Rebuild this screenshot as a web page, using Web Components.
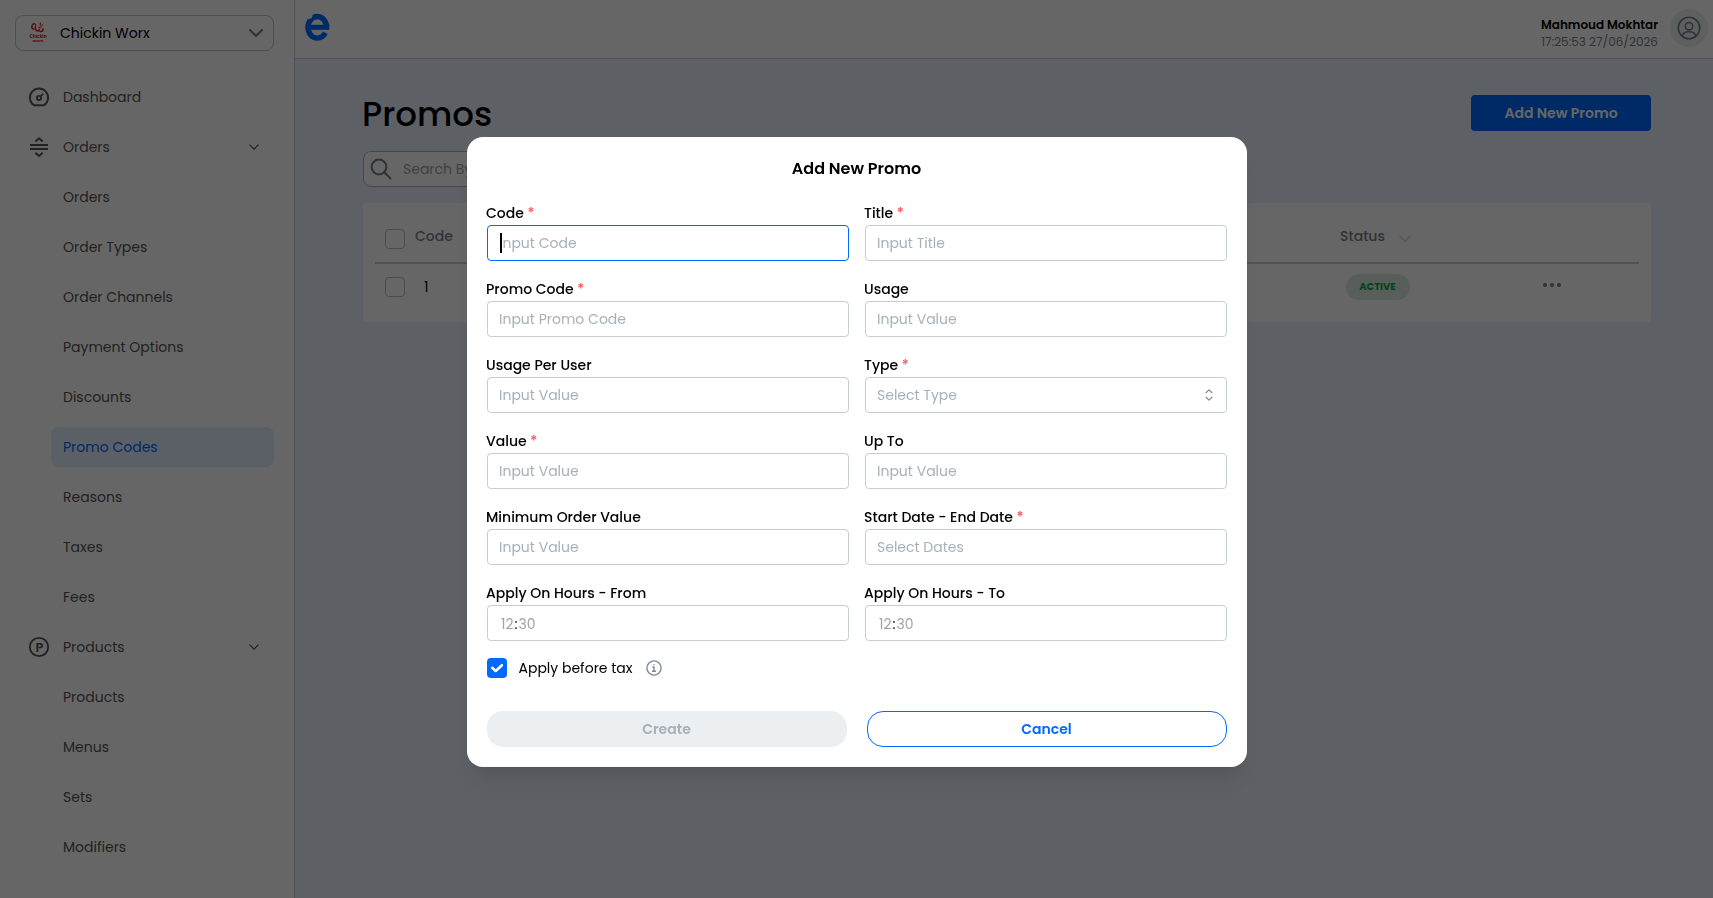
<!DOCTYPE html>
<html lang="en">
<head>
<meta charset="utf-8">
<title>Promos</title>
<style>
    html, body { margin: 0; height: 100%; overflow: hidden; }
    body {
        font-family: Poppins, Inter, "Open Sans", sans-serif;
        font-size: 14px;
        line-height: 20px;
        color: #000;
        --blue: #006aff;
        --line: #c8d3da;
        --muted: #78818b;
    }
</style>
</head>
<body>
<promo-app>
    <side-bar slot="side">
        <nav-item icon="dashboard">Dashboard</nav-item>
        <nav-item icon="orders" group>Orders</nav-item>
        <nav-item>Orders</nav-item>
        <nav-item>Order Types</nav-item>
        <nav-item>Order Channels</nav-item>
        <nav-item>Payment Options</nav-item>
        <nav-item>Discounts</nav-item>
        <nav-item active>Promo Codes</nav-item>
        <nav-item>Reasons</nav-item>
        <nav-item>Taxes</nav-item>
        <nav-item>Fees</nav-item>
        <nav-item icon="products" group>Products</nav-item>
        <nav-item>Products</nav-item>
        <nav-item>Menus</nav-item>
        <nav-item>Sets</nav-item>
        <nav-item>Modifiers</nav-item>
    </side-bar>
    <top-bar slot="top"></top-bar>
    <promo-page></promo-page>
</promo-app>

<modal-dialog>
    <span slot="title">Add New Promo</span>
    <form-field label="Code" required hint="Input Code" focused></form-field>
    <form-field label="Title" required hint="Input Title"></form-field>
    <form-field label="Promo Code" required hint="Input Promo Code"></form-field>
    <form-field label="Usage" hint="Input Value"></form-field>
    <form-field label="Usage Per User" hint="Input Value"></form-field>
    <form-field label="Type" required hint="Select Type" select></form-field>
    <form-field label="Value" required hint="Input Value"></form-field>
    <form-field label="Up To" hint="Input Value"></form-field>
    <form-field label="Minimum Order Value" hint="Input Value"></form-field>
    <form-field label="Start Date - End Date" required hint="Select Dates"></form-field>
    <form-field label="Apply On Hours - From" time></form-field>
    <form-field label="Apply On Hours - To" time></form-field>
    <check-line slot="option">Apply before tax</check-line>
    <pill-button slot="action" disabled>Create</pill-button>
    <pill-button slot="action">Cancel</pill-button>
</modal-dialog>

<script>
    const ICONS = {
        dashboard: `<svg width="24" height="24" viewBox="0 0 24 24" fill="none" stroke="currentColor" stroke-width="1.9" stroke-linecap="round" stroke-linejoin="round">
            <path d="M7 20.2a9.1 9.1 0 1 1 10 0z"/><circle cx="12" cy="13" r="2.1"/><path d="M13.6 11.4 15.8 9.2"/></svg>`,
        orders: `<svg width="24" height="24" viewBox="0 0 24 24" fill="none" stroke="currentColor" stroke-width="2">
            <path d="M3 10h18M3 14h18"/><path d="M8.3 6.4 12 3.2l3.7 3.2M8.3 17.8 12 21l3.7-3.2"/></svg>`,
        products: `<svg width="24" height="24" viewBox="0 0 24 24">
            <circle cx="12" cy="12" r="9.2" fill="none" stroke="currentColor" stroke-width="1.8"/>
            <text x="12.5" y="16.6" text-anchor="middle" font-size="13" font-weight="600" fill="currentColor">P</text></svg>`,
        chevron: `<svg width="10" height="6" viewBox="0 0 10 6" fill="none" stroke="currentColor" stroke-width="1.2"><path d="M.5.6 5 5.1 9.5.6"/></svg>`
    };

    /** Attaches an open shadow root with the given markup. */
    class BaseElement extends HTMLElement {
        connectedCallback() {
            if (this.shadowRoot) return;
            this.attachShadow({ mode: 'open' });
            this.shadowRoot.innerHTML = this.template();
        }
        attr(name) {
            return this.getAttribute(name) || '';
        }
    }

    class PromoApp extends BaseElement {
        template() {
            return `
            <style>
                :host { display: flex; height: 898px; background: #e9f2ff; }
                .main { flex: 1; display: flex; flex-direction: column; min-width: 0; }
            </style>
            <slot name="side"></slot>
            <div class="main"><slot name="top"></slot><slot></slot></div>`;
        }
    }

    class SideBar extends BaseElement {
        template() {
            return `
            <style>
                :host {
                    display: flex; flex-direction: column; box-sizing: border-box;
                    width: 295px; padding: 15px 20px 0 15px; flex: none;
                    background: #fff; border-right: 1px solid var(--line);
                }
                .brand {
                    display: flex; align-items: center; box-sizing: border-box;
                    width: 259px; height: 36px; padding: 0 10px;
                    border: 1px solid #c4c4c4; border-radius: 8px;
                }
                .brand span { margin-left: 10px; flex: 1; }
                .nav { display: flex; flex-direction: column; gap: 10px; margin-top: 26px; }
            </style>
            <div class="brand">
                <svg width="24" height="24" viewBox="0 0 24 24" fill="none" stroke="#f0141e" stroke-linecap="round">
                    <path stroke-width="1.5" d="M7.4 2.8C5 4.4 5.4 7.8 7.6 8.2M9.4 6c-.8 3 1.8 5 3.6 3 .4 2.4 4.4 2 4-1.2"/>
                    <path stroke-width="1" d="M7.4 2.6 10 3.2 9.4 6M14.3 1.8v2.6M17.2 3.2 15.4 5M12.6 6.600l2.600-.6"/>
                    <text x="12" y="16.6" text-anchor="middle" font-size="4.4" font-weight="700" fill="#f0141e" stroke="none">Chickin</text>
                    <text x="12" y="21" text-anchor="middle" font-size="4" font-weight="700" fill="#f0141e" stroke="none">Worx</text>
                </svg>
                <span>Chickin Worx</span>
                <svg width="14" height="9" viewBox="0 0 14 9" fill="none" stroke="#7a7a7a" stroke-width="2" stroke-linecap="round" stroke-linejoin="round"><path d="M1 1l6 6 6-6"/></svg>
            </div>
            <div class="nav"><slot></slot></div>`;
        }
    }

    class NavItem extends BaseElement {
        template() {
            return `
            <style>
                :host { display: flex; align-items: center; height: 40px; color: #555; }
                .icon { width: 36px; display: flex; justify-content: flex-end; }
                .box {
                    flex: 1; display: flex; align-items: center; justify-content: space-between;
                    height: 40px; padding: 0 15px 0 12px; border-radius: 8px; box-sizing: border-box;
                }
                :host([active]) .box { background: #e4eeff; color: var(--blue); }
                svg { display: block; }
            </style>
            <div class="icon">${ICONS[this.attr('icon')] || ''}</div>
            <div class="box">
                <slot></slot>
                ${this.hasAttribute('group') ? ICONS.chevron : ''}
            </div>`;
        }
    }

    class TopBar extends BaseElement {
        template() {
            return `
            <style>
                :host {
                    display: flex; justify-content: space-between; box-sizing: border-box;
                    height: 59px; padding: 9px 5px 0 10px; flex: none;
                    background: #fff; border-bottom: 1px solid var(--line);
                }
                .logo { margin-top: 4px; }
                .user { display: flex; gap: 12px; }
                .who { display: flex; flex-direction: column; font-size: 12px; line-height: 17px; padding-top: 7px; text-align: right; }
                .name { font-weight: 600; }
                .time { color: var(--muted); }
                .avatar {
                    width: 38px; height: 38px; border-radius: 50%; background: #eaf0f1;
                    display: flex; align-items: center; justify-content: center;
                }
            </style>
            <!-- brand ring with a cross bar and an open lower right -->
            <svg class="logo" width="25" height="28" viewBox="0 0 25 28">
                <ellipse cx="12.3" cy="14.3" rx="9.3" ry="10.8" fill="none" stroke="#006aff" stroke-width="5.4" pathLength="100" stroke-dasharray="91 9" stroke-dashoffset="-9"/>
                <rect x="3" y="11.8" width="21.3" height="5" fill="#006aff"/>
                <circle cx="3.6" cy="2" r="4" fill="#fff"/>
            </svg>
            <div class="user">
                <div class="who"><span class="name">Mahmoud Mokhtar</span><span class="time">17:25:53 27/06/2026</span></div>
                <div class="avatar">
                    <svg width="24" height="24" viewBox="0 0 24 24" fill="none" stroke="#757f88" stroke-width="1.6">
                        <circle cx="12" cy="12" r="10.7"/><circle cx="12" cy="10.2" r="3.7"/><path d="M5.2 20c.6-2.9 3-4.3 6.8-4.3s6.200 1.400 6.800 4.300"/>
                    </svg>
                </div>
            </div>`;
        }
    }

    class PromoPage extends BaseElement {
        template() {
            return `
            <style>
                :host { display: block; padding: 36px 62px 0 68px; }
                .head { display: flex; justify-content: space-between; }
                h1 { margin: 1px 0 -1px -1px; font-size: 34px; line-height: 36px; font-weight: 500; }
                .add {
                    width: 180px; height: 36px; border-radius: 4px; background: var(--blue); color: #fff;
                    display: flex; align-items: center; justify-content: center; font-weight: 600;
                }
                .search {
                    display: flex; align-items: center; gap: 11px; box-sizing: border-box;
                    width: 400px; height: 36px; margin-top: 20px; padding-left: 6px;
                    border: 1px solid #a9b5be; border-radius: 8px; background: #fff; color: #9aa4ac;
                }
                .card {
                    box-sizing: border-box; height: 119px; margin-top: 16px; padding: 0 12px;
                    background: #fff; border-radius: 4px;
                }
                .row { display: flex; box-sizing: border-box; padding-left: 10px; }
                .th { height: 61px; padding-top: 26px; border-bottom: 2px solid #c4d2d6; color: var(--muted); font-weight: 500; }
                .td { padding-top: 10px; }
                .check {
                    width: 20px; height: 20px; box-sizing: border-box; flex: none;
                    border: 1px solid #b9c0c5; border-radius: 4px;
                }
                .td .check { margin-top: 3px; }
                .th .code { width: 925px; padding-left: 10px; margin-top: -3px; }
                .td .code { box-sizing: border-box; width: 941px; padding-left: 19px; margin-top: 3px; }
                .status { display: flex; width: 71px; justify-content: space-between; margin-top: -3px; }
                .status svg { margin-top: 9px; }
                .pill {
                    width: 64px; height: 26px; border-radius: 13px; background: #dceee4; color: #00a843;
                    box-sizing: border-box; padding-right: 1px;
                    display: flex; align-items: center; justify-content: center; font-size: 10px; font-weight: 700;
                }
                .more { margin: 9px 0 0 132px; }
            </style>
            <div class="head">
                <h1>Promos</h1>
                <div class="add">Add New Promo</div>
            </div>
            <div class="search">
                <svg width="22" height="22" viewBox="0 0 22 22" fill="none" stroke="#757f88" stroke-width="2" stroke-linecap="round"><circle cx="9" cy="9" r="7.4"/><path d="M14.3 14.3l6.2 6.2"/></svg>
                <span>Search By</span>
            </div>
            <div class="card">
                <div class="row th">
                    <div class="check"></div>
                    <div class="code">Code</div>
                    <div class="status"><span>Status</span>
                        <svg width="12" height="8" viewBox="0 0 12 8" fill="none" stroke="#dadada" stroke-width="1.5"><path d="M.6.8 6 6.4 11.4.8"/></svg>
                    </div>
                </div>
                <div class="row td">
                    <div class="check"></div>
                    <div class="code">1</div>
                    <div class="pill">ACTIVE</div>
                    <svg class="more" width="20" height="4" viewBox="0 0 20 4" fill="#757f88"><circle cx="3" cy="2" r="2"/><circle cx="10" cy="2" r="2"/><circle cx="17" cy="2" r="2"/></svg>
                </div>
            </div>`;
        }
    }

    class ModalDialog extends BaseElement {
        template() {
            return `
            <style>
                :host {
                    position: fixed; inset: 0; display: flex; justify-content: center; align-items: flex-start;
                    padding: 137px 0 0 1px; background: rgba(0, 0, 0, .6);
                }
                .panel {
                    box-sizing: border-box; width: 780px; height: 630px; padding: 20px;
                    display: flex; flex-direction: column; background: #fff; border-radius: 16px;
                    box-shadow: 0 20px 25px -5px rgba(0, 0, 0, .1), 0 10px 10px -5px rgba(0, 0, 0, .04);
                }
                .title { text-align: center; font-size: 16px; line-height: 24px; font-weight: 600; padding-right: 1px; }
                .grid { display: grid; grid-template-columns: 1fr 1fr; gap: 17px 16px; margin-top: 21px; }
                .option { margin-top: 17px; }
                .actions { display: flex; gap: 20px; margin-top: auto; }
            </style>
            <div class="panel">
                <div class="title"><slot name="title"></slot></div>
                <div class="grid"><slot></slot></div>
                <div class="option"><slot name="option"></slot></div>
                <div class="actions"><slot name="action"></slot></div>
            </div>`;
        }
    }

    class FormField extends BaseElement {
        template() {
            const value = this.hasAttribute('time')
                ? `<span class="time">12<b>:</b>30</span>`
                : `<span>${this.attr('hint')}</span>`;
            return `
            <style>
                :host { display: flex; flex-direction: column; height: 59px; }
                .label { height: 23px; line-height: 22px; font-weight: 500; margin-left: -1px; }
                .star { color: #ff4d55; }
                .input {
                    display: flex; align-items: center; justify-content: space-between; box-sizing: border-box;
                    height: 36px; padding: 0 13px 0 11px; position: relative;
                    border: 1px solid #c5ced6; border-radius: 4px; color: #a6b1ba;
                }
                :host([focused]) .input { border-color: var(--blue); }
                .caret { position: absolute; left: 12px; top: 7px; width: 2px; height: 20px; background: #000; }
                .time { color: #a3a3a3; padding: 2px 0 0 2px; }
                b { font-weight: 400; color: #000; padding: 0 1px; }
            </style>
            <div class="label">${this.attr('label')}${this.hasAttribute('required') ? ' <span class="star">*</span>' : ''}</div>
            <div class="input">
                ${value}
                ${this.hasAttribute('focused') ? '<i class="caret"></i>' : ''}
                ${this.hasAttribute('select') ? `<svg width="8" height="12" viewBox="0 0 8 12" fill="none" stroke="#7f8b93" stroke-width="1.2" stroke-linecap="round" stroke-linejoin="round"><path d="M1 3.7 4 .9l3 2.8M1 8.3l3 2.8 3-2.8"/></svg>` : ''}
            </div>`;
        }
    }

    class CheckLine extends BaseElement {
        template() {
            return `
            <style>
                :host { display: flex; align-items: center; height: 20px; }
                .box { width: 20px; height: 20px; border-radius: 4px; background: var(--blue); margin-right: 11.5px; }
                svg { display: block; }
                .info { margin-left: 13.5px; }
            </style>
            <div class="box"><svg width="20" height="20" viewBox="0 0 20 20" fill="none" stroke="#fff" stroke-width="2.6" stroke-linecap="round" stroke-linejoin="round"><path d="M5.2 9.8 8.7 13l6.2-5.8"/></svg></div>
            <slot></slot>
            <svg class="info" width="16" height="16" viewBox="0 0 16 16" fill="none" stroke="#7f8b93" stroke-width="1.4"><circle cx="8" cy="8" r="7.1"/><path d="M6.3 7.2H8v4M6 11.3h4M7.3 4.9h1.3"/></svg>`;
        }
    }

    class PillButton extends BaseElement {
        template() {
            return `
            <style>
                :host {
                    flex: 1; display: flex; align-items: center; justify-content: center; box-sizing: border-box;
                    height: 36px; padding-right: 1px; border: 1px solid var(--blue); border-radius: 16px;
                    color: var(--blue); font-weight: 600;
                }
                :host([disabled]) { background: #ebeff2; border-color: #ebeff2; color: #a6b1ba; }
            </style>
            <slot></slot>`;
        }
    }

    customElements.define('promo-app', PromoApp);
    customElements.define('side-bar', SideBar);
    customElements.define('top-bar', TopBar);
    customElements.define('promo-page', PromoPage);
    customElements.define('modal-dialog', ModalDialog);
    customElements.define('nav-item', NavItem);
    customElements.define('form-field', FormField);
    customElements.define('check-line', CheckLine);
    customElements.define('pill-button', PillButton);
</script>
</body>
</html>
